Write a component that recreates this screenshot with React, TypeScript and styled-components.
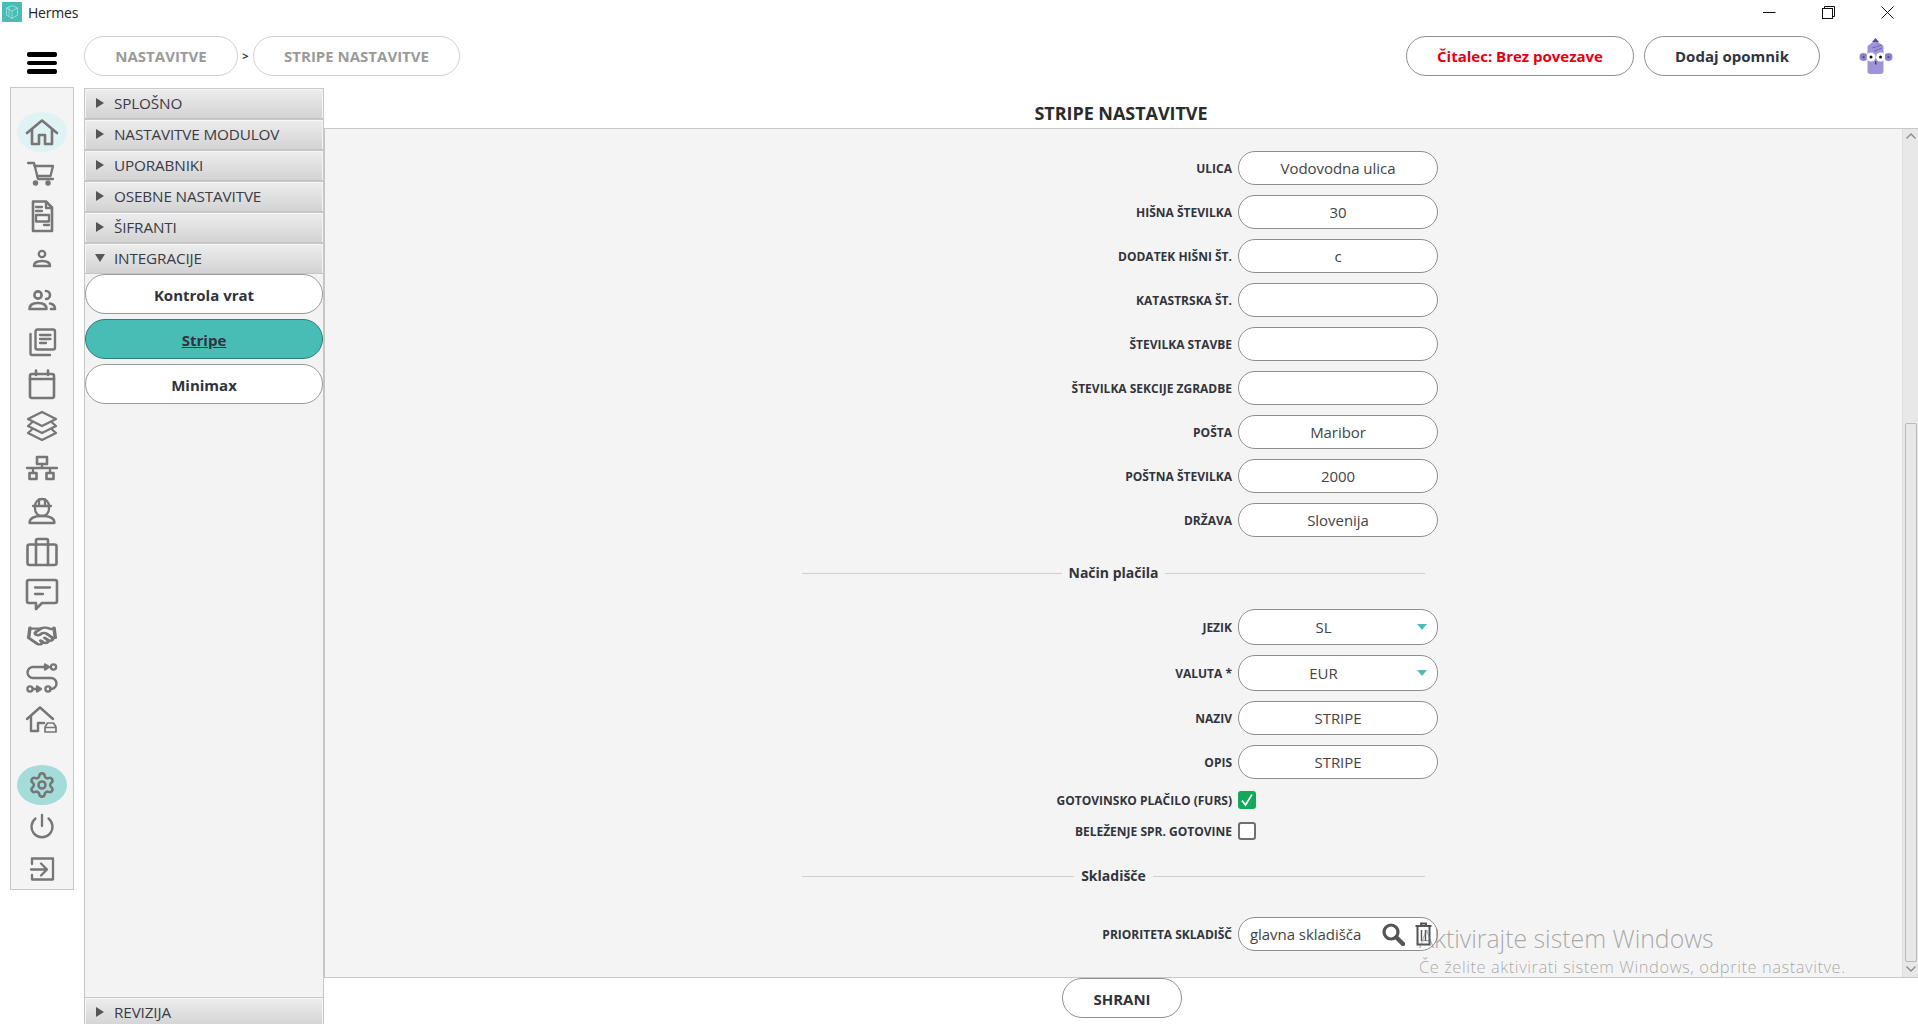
import React from "react";
import styled, { createGlobalStyle } from "styled-components";
import { Handshake, Settings } from "lucide-react";

const Global = createGlobalStyle`
  html, body { margin: 0; padding: 0; background: #fff; overflow: hidden; }
  * { box-sizing: border-box; }
  body { font-family: "Open Sans", "Noto Sans", sans-serif; color: #333; }
`;

const Page = styled.div`
  width: 1918px; height: 1024px; display: flex; flex-direction: column; position: relative; overflow: hidden; background: #fff;
`;
const TitleBar = styled.div`
  height: 30px; flex: none; display: flex; align-items: center; padding: 0 0 6px 2px;
`;
const AppName = styled.span`
  font-size: 14px; margin-left: 6px; color: #222; flex: 1; font-family: "Open Sans", sans-serif; letter-spacing: -0.2px;
`;
const WinControls = styled.div`
  display: flex; gap: 46px; margin-right: 24px; align-items: center;
`;
const TopBar = styled.div`
  height: 57px; flex: none; display: flex; align-items: flex-start; padding-top: 6px;
`;
const Burger = styled.div`
  width: 30px; margin: 16px 27px 0 27px; display: flex; flex-direction: column; gap: 4px;
`;
const BurgerBar = styled.span`
  display: block; height: 4.5px; background: #000; border-radius: 2px;
`;
const Crumb = styled.div<{ $w: number }>`
  width: ${p => p.$w}px; height: 40px; border: 1px solid #cfcfcf; border-radius: 20px; display: flex; align-items: center; justify-content: center;
  font-size: 15px; font-weight: 700; color: #9a9a9a; background: #fff;
`;
const CrumbSep = styled.span`
  width: 15px; height: 40px; line-height: 40px; text-align: center; font-size: 11px; font-weight: 700; color: #333;
`;
const TopRight = styled.div`
  margin-left: auto; display: flex; gap: 10px; align-items: flex-start; padding-right: 17px;
`;
const TopButton = styled.div<{ $w: number; $red?: boolean }>`
  width: ${p => p.$w}px; height: 40px; border: 1px solid #8f8f8f; border-radius: 20px; display: flex; align-items: center; justify-content: center;
  font-size: 15px; font-weight: 700; color: ${p => (p.$red ? "#e60012" : "#2f3542")}; background: #fff;
`;
const Mascot = styled.div`
  margin-left: 21px; margin-top: -6px; width: 50px; height: 50px;
`;
const Workspace = styled.div`
  flex: 1; min-height: 0; display: flex; align-items: stretch;
`;
const Rail = styled.nav`
  width: 64px; height: 803px; margin-left: 10px; flex: none; background: #f4f4f4; border: 1px solid #c8c8c8;
  display: flex; flex-direction: column; align-items: center; padding-top: 23px;
`;
const RailGap = styled.div`
  height: 23px; flex: none;
`;
const RailItem = styled.div<{ $bg?: string }>`
  width: 50px; height: 42px; flex: none; display: flex; align-items: center; justify-content: center; position: relative; z-index: 0;
  &::before {
    content: ""; position: absolute; left: 0; top: 1px; width: 50px; height: 40px; border-radius: 50%;
    background: ${p => p.$bg || "transparent"}; z-index: -1;
  }
`;
const Accordion = styled.aside`
  width: 240px; margin-left: 10px; margin-top: 1px; margin-bottom: -4px; flex: none; display: flex; flex-direction: column;
  background: #f3f3f3; border-left: 1px solid #c6c6c6; border-right: 1px solid #c6c6c6;
`;
const AccHeader = styled.div`
  height: 31px; flex: none; display: flex; align-items: center; padding-left: 11px; gap: 10px;
  background: linear-gradient(#ededed, #d3d3d3); border-top: 1px solid #c8c8c8; border-bottom: 1px solid #c4c4c4; box-shadow: inset 0 1px 0 #f6f6f6, inset 1px 0 0 #f4f4f4, inset -1px 0 0 #f4f4f4;
  font-size: 15.3px; color: #3b3b46; letter-spacing: -0.15px; padding-bottom: 1px;
`;
const TriRight = styled.span`
  width: 0; height: 0; border-left: 8px solid #555; border-top: 5px solid transparent; border-bottom: 5px solid transparent; flex: none;
`;
const TriDown = styled.span`
  width: 0; height: 0; margin-left: -1px; margin-right: -1px; border-top: 8px solid #555; border-left: 5.5px solid transparent; border-right: 5.5px solid transparent; flex: none;
`;
const AccBody = styled.div`
  flex: 1; display: flex; flex-direction: column; gap: 5px;
`;
const AccItem = styled.div<{ $active?: boolean }>`
  height: 40px; flex: none; border-radius: 20px; display: flex; align-items: center; justify-content: center; padding-top: 1px;
  font-size: 15px; font-weight: 700; color: #2f3340;
  border: 1px solid ${p => (p.$active ? "#2f7f7a" : "#9a9a9a")};
  background: ${p => (p.$active ? "#48bdb5" : "#fff")};
  text-decoration: ${p => (p.$active ? "underline" : "none")};
`;
const Main = styled.main`
  flex: 1; min-width: 0; display: flex; flex-direction: column;
`;
const MainTitle = styled.h1`
  margin: 0; height: 41px; flex: none; text-align: center; font-size: 18px; font-weight: 700; color: #2b2b2b; padding-top: 14px; line-height: 25px; letter-spacing: -0.05px;
`;
const Panel = styled.div`
  height: 850px; flex: none; display: flex; background: #f4f4f4; border-top: 1px solid #c8c8c8; border-bottom: 1px solid #c8c8c8; border-left: 1px solid #c6c6c6;
`;
const FormArea = styled.div`
  flex: 1; padding: 22px 0 0 477px; position: relative;
`;
const Form = styled.div`
  width: 640px; display: flex; flex-direction: column;
`;
const Row = styled.div<{ $h?: number; $mt?: number }>`
  display: grid; grid-template-columns: 430px 200px; column-gap: 6px; align-items: center; height: ${p => p.$h ?? 34}px; margin-top: ${p => p.$mt ?? 10}px;
  &:first-child { margin-top: 0; }
`;
const Label = styled.div`
  text-align: right; font-size: 12px; font-weight: 700; color: #31343c; white-space: nowrap; line-height: 16px; padding-top: 1px;
`;
const Field = styled.div<{ $left?: boolean; $h?: number; $select?: boolean }>`
  height: ${p => p.$h ?? 34}px; background: #fff; border: 1px solid #8e8e8e; border-radius: 17px; display: flex; align-items: center; position: relative;
  justify-content: ${p => (p.$left ? "flex-start" : "center")};
  padding: ${p => (p.$left ? "0 0 0 11px" : p.$select ? "0 29px 0 0" : "0")};
  font-size: 15px; color: #444; white-space: nowrap; letter-spacing: -0.05px;
`;
const SelectArrow = styled.span`
  position: absolute; right: 10px; top: 14px; width: 0; height: 0; border-top: 6px solid #4dbdb5; border-left: 5px solid transparent; border-right: 5px solid transparent;
`;
const FieldTools = styled.span`
  margin-left: auto; margin-right: 5px; display: flex; align-items: center; gap: 10px;
`;
const Check = styled.div<{ $on?: boolean }>`
  width: 18px; height: 18px; border-radius: 3px; display: flex; align-items: center; justify-content: center;
  background: ${p => (p.$on ? "#14a85a" : "#fff")}; border: ${p => (p.$on ? "none" : "2px solid #6f6f6f")};
`;
const Divider = styled.div<{ $mt: number; $mb: number }>`
  width: 623px; height: 20px; display: flex; align-items: center; gap: 7px; margin-top: ${p => p.$mt - 1}px; margin-bottom: ${p => p.$mb + 1}px;
  font-size: 14px; font-weight: 700; color: #31343c; white-space: nowrap;
  &::before, &::after { content: ""; flex: 1; height: 1px; margin-top: 2px; background: #cfcfcf; }
`;
const ScrollTrack = styled.div`
  width: 16px; flex: none; background: #e8e8e8; border-left: 1px solid #dedede; display: flex; flex-direction: column; align-items: center;
`;
const ScrollArrow = styled.div`
  height: 14px; flex: none; display: flex; align-items: center; justify-content: center;
`;
const ScrollThumb = styled.div`
  width: 12px; height: 539px; margin-top: 280px; border: 1px solid #b9b9b9; border-radius: 2px; background: #e8e8e8; flex: none;
`;
const Footer = styled.div`
  flex: 1; display: flex; justify-content: center; align-items: flex-start; padding-left: 2px;
`;
const SaveButton = styled.div`
  width: 120px; height: 40px; border: 1px solid #8f8f8f; border-radius: 20px; background: #fff; display: flex; align-items: center; justify-content: center;
  font-size: 15px; font-weight: 700; color: #2f3340; padding-top: 1px;
`;
const Watermark = styled.div`
  position: absolute; left: 1419px; top: 922px; pointer-events: none; color: rgba(110, 110, 110, 0.58); font-family: "Open Sans", sans-serif;
`;
const WatermarkTitle = styled.div`
  font-size: 24.8px; line-height: 32px; font-weight: 300;
`;
const WatermarkText = styled.div`
  font-size: 16.5px; line-height: 20px; margin-top: 3px; letter-spacing: 0.54px; font-weight: 300;
`;

const S = ({ children }: { children: React.ReactNode }) => (
  <svg width="34" height="34" viewBox="0 0 34 34" fill="none" stroke="#767676" strokeWidth="2.3" strokeLinejoin="round" strokeLinecap="round">
    {children}
  </svg>
);

const icons: React.ReactNode[] = [
  <S><path d="M2 18 17 5.500 32 18" strokeWidth="2.600" /><path d="M7 14.500V29h7v-9h6v9h7V14.500" strokeWidth="2.600" /></S>,
  <S><path d="M3 6h6l4 16h15" /><path d="M9.500 9H28l-2.500 10H12" /><circle cx="10.500" cy="26" r="1.600" fill="#767676" /><circle cx="23" cy="26" r="1.600" fill="#767676" /></S>,
  <S><path d="M8 2.500h13l6 6v23.500H8z" strokeWidth="2.600" /><path d="M21 3v6h6" /><path d="M11 8h6M11 12h6M19 26h5" /><rect x="11" y="16" width="13" height="6.500" /></S>,
  <S><circle cx="17" cy="13" r="3.200" /><path d="M9 25c0-3.500 3.500-5 8-5s8 1.500 8 5z" strokeWidth="2.600" /></S>,
  <S><circle cx="13" cy="12" r="3.600" strokeWidth="2.600" /><path d="M21 8a4 4 0 0 1 0 8" strokeWidth="2.600" /><path d="M4.500 26c0-4 3.500-6 8.500-6s8.500 2 8.500 6z" strokeWidth="2.600" /><path d="M25 20.500c3 .5 5 2.500 5 5.500h-4" strokeWidth="2.600" /></S>,
  <S><path d="M5.500 9v19.500A1.500 1.500 0 0 0 7 30h18" strokeWidth="2.400" /><rect x="10.500" y="4.500" width="19.500" height="20" rx="2" strokeWidth="2.400" /><path d="M15 10h10.500M15 14h10.500M15 18h6" /></S>,
  <S><rect x="5" y="7" width="24" height="24" rx="2" strokeWidth="2.600" /><path d="M5 12h24" strokeWidth="2.600" /><path d="M11 3.500V8M23 3.500V8" strokeWidth="2.600" /></S>,
  <S><path d="M17 3 31 10 17 17 3 10z" /><path d="M7 13.500 3 17l14 7 14-7-4-3.500" /><path d="M7 20.500 3 24l14 7 14-7-4-3.500" /></S>,
  <S><rect x="12" y="6" width="10" height="7" strokeWidth="2.600" /><path d="M17 13v4M2 17h30M8 17v5M25 17v5" /><rect x="4.500" y="22" width="7" height="6" strokeWidth="2.600" /><rect x="21.500" y="22" width="7" height="6" strokeWidth="2.600" /></S>,
  <S><path d="M10 13a7 7 0 0 1 14 0v3a7 7 0 0 1-14 0z" /><path d="M8 13h18M14 6.500V12M20 6.500V12" /><path d="M4.500 30c0-5 5-7 12.500-7s12.500 2 12.500 7z" /></S>,
  <S><rect x="2.500" y="9.500" width="29" height="20.500" rx="2" strokeWidth="2.600" /><path d="M11 9V5.500A1.500 1.500 0 0 1 12.500 4h9A1.500 1.500 0 0 1 23 5.500V9M11 10v20M23 10v20" strokeWidth="2.600" /></S>,
  <S><path d="M4 3h26a2 2 0 0 1 2 2v19a2 2 0 0 1-2 2H17l-6 6v-6H4a2 2 0 0 1-2-2V5a2 2 0 0 1 2-2z" strokeWidth="2.600" /><path d="M10 10.500h15M10 17h8" /></S>,
  <Handshake width={32} height={22} preserveAspectRatio="none" color="#767676" strokeWidth={2.600} />,
  <S><path d="M20 6H8a5.500 5.500 0 0 0 0 11h18a5.500 5.500 0 0 1 0 11h-1" strokeWidth="2.400" /><path d="M20 3.500 24 6l-4 2.500z" fill="#767676" /><circle cx="28.500" cy="6" r="2.600" /><circle cx="23" cy="28" r="2.600" /><circle cx="5" cy="28" r="2.600" /><path d="M8 28h4" /><path d="M12 25.500 16 28l-4 2.500z" fill="#767676" /></S>,
  <S><path d="M2 16 15 4.500 28 16" strokeWidth="2.400" /><path d="M6 13v15h7v-8h6" strokeWidth="2.400" /><path d="M20 29v-5l2.500-4h6l2.500 4v5zM20 24.500h11" strokeWidth="1.700" /></S>,
];
const footIcons: React.ReactNode[] = [
  <Settings size={28} color="#767676" strokeWidth={2.200} />,
  <S><path d="M10.500 8.500a10.500 10.500 0 1 0 13 0" /><path d="M17 5v11" /></S>,
  <S><path d="M7 12V6.500h21v21H7V23" strokeWidth="2.300" /><path d="M6 17.500h16M16 11.500l6 6-6 6" /></S>,
];

const Logo = () => (
  <svg width="20" height="20" viewBox="0 0 20 20">
    <rect width="20" height="20" fill="#48bdb5" />
    <path d="M10 3.500 15.500 6v7L10 16.500 4.500 13V6z M4.500 6 10 9l5.500-3M10 9v7.500M7 5v9" fill="none" stroke="#9fe0da" strokeWidth="0.900" />
  </svg>
);

const MascotArt = () => (
  <svg width="50" height="50" viewBox="0 0 50 50">
    <circle cx="12.500" cy="27" r="4" fill="#8f80c9" />
    <circle cx="37.500" cy="27" r="4" fill="#8f80c9" />
    <path d="M16.500 16 24.500 10l8 6v25q0 3-3 3H19.500q-3 0-3-3z" fill="#a094d8" />
    <path d="M21 12 24.500 8l3.500 4z" fill="#5b4aa3" />
    <path d="M21 18l10-3M23 21l8-3" stroke="#6a5bb0" strokeWidth="0.800" fill="none" />
    <circle cx="20" cy="27" r="4.500" fill="#fff" />
    <circle cx="29.500" cy="27" r="4.500" fill="#fff" />
    <circle cx="20" cy="27" r="1.500" fill="#111" />
    <circle cx="29.500" cy="27" r="1.500" fill="#111" />
    <path d="M24.800 31v3.500" stroke="#222" strokeWidth="1" />
    <circle cx="12.500" cy="27" r="1.200" fill="#5b4aa3" />
    <circle cx="37.500" cy="27" r="1.200" fill="#5b4aa3" />
  </svg>
);

const SearchGlyph = () => (
  <svg width="24" height="24" viewBox="0 0 24 24" fill="none" stroke="#555">
    <circle cx="10" cy="10" r="7" strokeWidth="3.200" />
    <path d="M15.500 15.500 22 22" strokeWidth="4.400" strokeLinecap="round" />
  </svg>
);

const TrashGlyph = () => (
  <svg width="17" height="24" viewBox="0 0 17 24" fill="none" stroke="#555" strokeWidth="2">
    <path d="M.5 4h16M6 4V1.500h5V4" />
    <path d="M2.500 4.500V22.500h12V4.500" />
    <path d="M6.500 8v11M10.500 8v11" strokeWidth="1.400" />
  </svg>
);

const addressRows: [string, string][] = [
  ["ULICA", "Vodovodna ulica"],
  ["HIŠNA ŠTEVILKA", "30"],
  ["DODATEK HIŠNI ŠT.", "c"],
  ["KATASTRSKA ŠT.", ""],
  ["ŠTEVILKA STAVBE", ""],
  ["ŠTEVILKA SEKCIJE ZGRADBE", ""],
  ["POŠTA", "Maribor"],
  ["POŠTNA ŠTEVILKA", "2000"],
  ["DRŽAVA", "Slovenija"],
];

const sections = ["SPLOŠNO", "NASTAVITVE MODULOV", "UPORABNIKI", "OSEBNE NASTAVITVE", "ŠIFRANTI"];

export default function App() {
  return (
    <Page>
      <Global />
      <TitleBar>
        <Logo />
        <AppName>Hermes</AppName>
        <WinControls>
          <svg width="13" height="13" viewBox="0 0 13 13"><path d="M0 6.500h12.500" stroke="#111" strokeWidth="1" /></svg>
          <svg width="13" height="13" viewBox="0 0 13 13" fill="none" stroke="#111" strokeWidth="1"><rect x=".5" y="2.500" width="10" height="10" /><path d="M2.500 2.500V.5h10v10h-2" /></svg>
          <svg width="13" height="13" viewBox="0 0 13 13"><path d="M.5.5l12 12M12.500.5l-12 12" stroke="#111" strokeWidth="1" /></svg>
        </WinControls>
      </TitleBar>
      <TopBar>
        <Burger>
          <BurgerBar />
          <BurgerBar />
          <BurgerBar />
        </Burger>
        <Crumb $w={154}>NASTAVITVE</Crumb>
        <CrumbSep>&gt;</CrumbSep>
        <Crumb $w={207}>STRIPE NASTAVITVE</Crumb>
        <TopRight>
          <TopButton $w={228} $red>Čitalec: Brez povezave</TopButton>
          <TopButton $w={176}>Dodaj opomnik</TopButton>
          <Mascot><MascotArt /></Mascot>
        </TopRight>
      </TopBar>
      <Workspace>
        <Rail>
          {icons.map((ic, i) => (
            <RailItem key={i} $bg={i === 0 ? "#dff2f4" : undefined}>{ic}</RailItem>
          ))}
          <RailGap />
          {footIcons.map((ic, i) => (
            <RailItem key={i} $bg={i === 0 ? "#a3dcd8" : undefined}>{ic}</RailItem>
          ))}
        </Rail>
        <Accordion>
          {sections.map(s => (
            <AccHeader key={s}><TriRight />{s}</AccHeader>
          ))}
          <AccHeader><TriDown />INTEGRACIJE</AccHeader>
          <AccBody>
            <AccItem>Kontrola vrat</AccItem>
            <AccItem $active>Stripe</AccItem>
            <AccItem>Minimax</AccItem>
          </AccBody>
          <AccHeader><TriRight />REVIZIJA</AccHeader>
        </Accordion>
        <Main>
          <MainTitle>STRIPE NASTAVITVE</MainTitle>
          <Panel>
            <FormArea>
              <Form>
                {addressRows.map(([l, v]) => (
                  <Row key={l}><Label>{l}</Label><Field>{v}</Field></Row>
                ))}
                <Divider $mt={26} $mb={26}>Način plačila</Divider>
                <Row $h={36} $mt={0}><Label>JEZIK</Label><Field $h={36} $select>SL<SelectArrow /></Field></Row>
                <Row $h={36}><Label>VALUTA *</Label><Field $h={36} $select>EUR<SelectArrow /></Field></Row>
                <Row><Label>NAZIV</Label><Field>STRIPE</Field></Row>
                <Row><Label>OPIS</Label><Field>STRIPE</Field></Row>
                <Row $h={18} $mt={12}>
                  <Label>GOTOVINSKO PLAČILO (FURS)</Label>
                  <Check $on>
                    <svg width="14" height="14" viewBox="0 0 14 14" fill="none" stroke="#fff" strokeWidth="1.600"><path d="M2 7.500 5.500 12 12 1.500" /></svg>
                  </Check>
                </Row>
                <Row $h={18} $mt={13}><Label>BELEŽENJE SPR. GOTOVINE</Label><Check /></Row>
                <Divider $mt={26} $mb={31}>Skladišče</Divider>
                <Row $mt={0}>
                  <Label>PRIORITETA SKLADIŠČ</Label>
                  <Field $left>
                    glavna skladišča
                    <FieldTools>
                      <SearchGlyph />
                      <TrashGlyph />
                    </FieldTools>
                  </Field>
                </Row>
              </Form>
            </FormArea>
            <ScrollTrack>
              <ScrollArrow><svg width="12" height="8" viewBox="0 0 12 8"><path d="M1.500 6.500 6 2l4.500 4.500" fill="none" stroke="#8a8a8a" strokeWidth="1.400" /></svg></ScrollArrow>
              <ScrollThumb />
              <ScrollArrow><svg width="12" height="8" viewBox="0 0 12 8"><path d="M1.500 1.500 6 6l4.500-4.500" fill="none" stroke="#8a8a8a" strokeWidth="1.400" /></svg></ScrollArrow>
            </ScrollTrack>
          </Panel>
          <Footer><SaveButton>SHRANI</SaveButton></Footer>
        </Main>
      </Workspace>
      <Watermark>
        <WatermarkTitle>Aktivirajte sistem Windows</WatermarkTitle>
        <WatermarkText>Če želite aktivirati sistem Windows, odprite nastavitve.</WatermarkText>
      </Watermark>
    </Page>
  );
}
